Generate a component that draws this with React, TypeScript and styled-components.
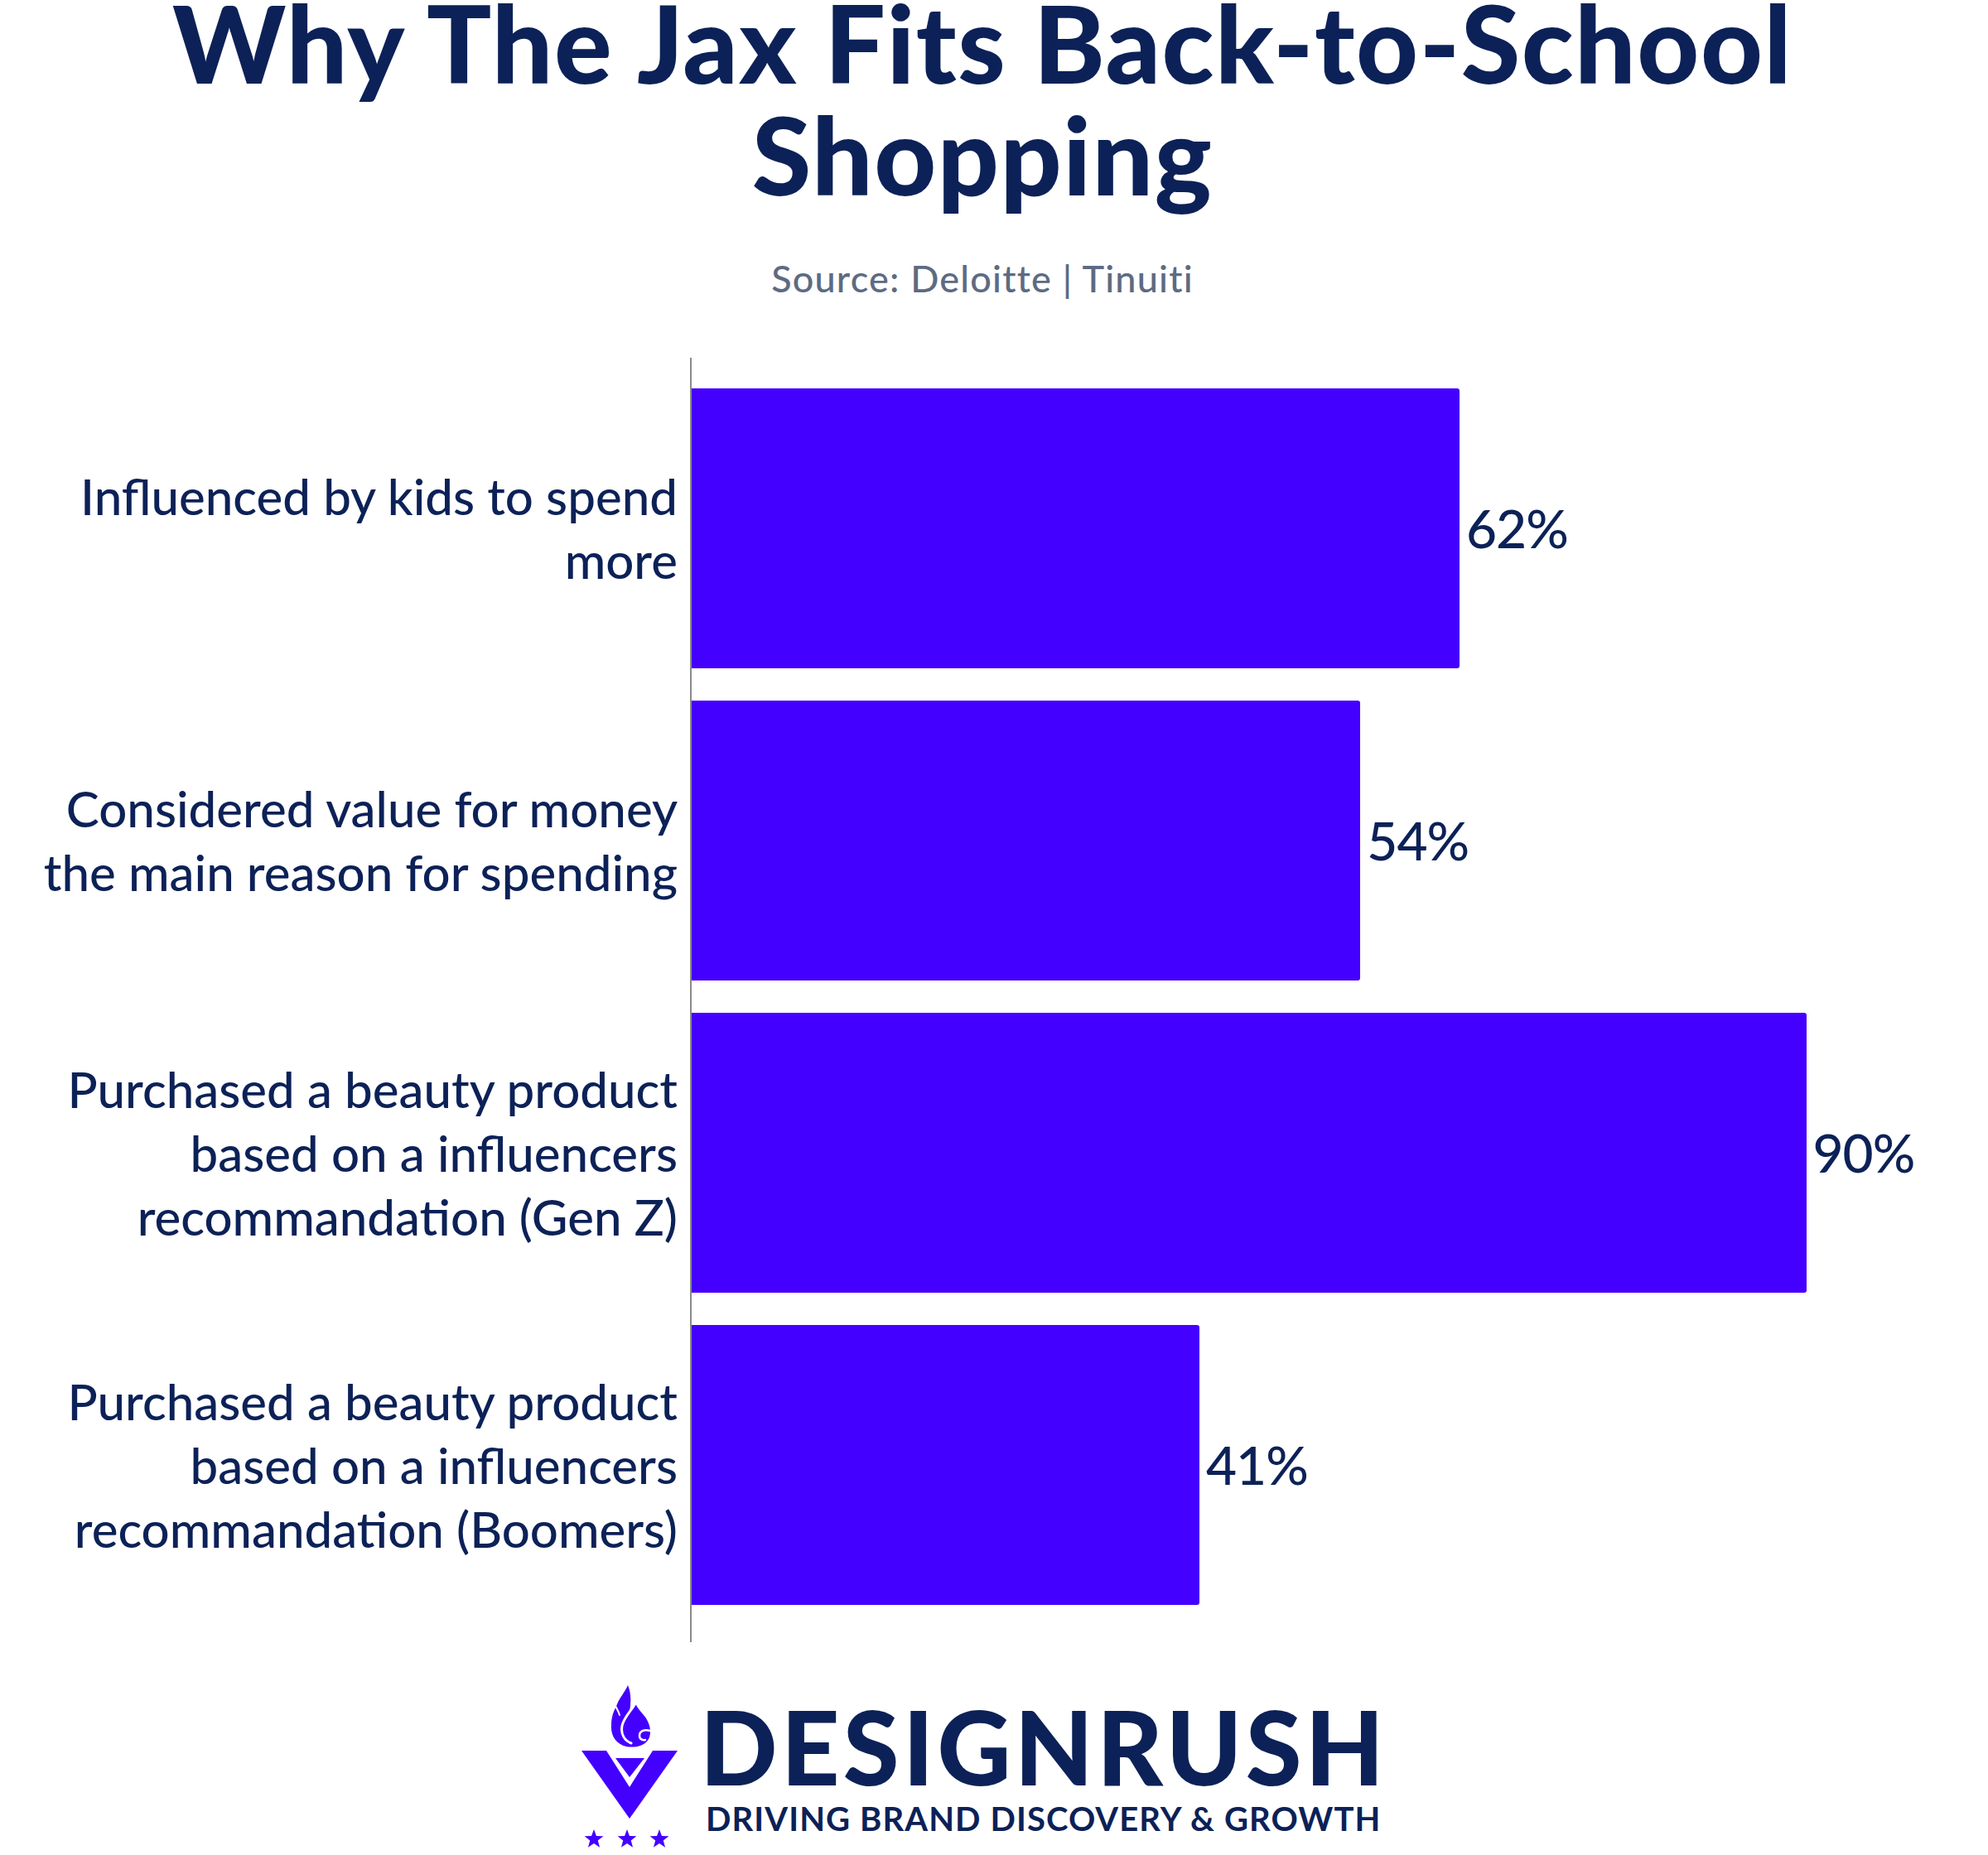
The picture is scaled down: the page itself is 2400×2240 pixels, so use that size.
import styled, { createGlobalStyle } from 'styled-components';

const NAVY = '#0c2157';
const VIOLET = '#4400ff';
const PX_PER_PCT = 14.95;

interface IRow {
  lines: string[];
  value: number;
}

const rows: IRow[] = [
  { lines: ['Influenced by kids to spend', 'more'], value: 62 },
  { lines: ['Considered value for money', 'the main reason for spending'], value: 54 },
  {
    lines: ['Purchased a beauty product', 'based on a influencers', 'recommandation (Gen Z)'],
    value: 90,
  },
  {
    lines: ['Purchased a beauty product', 'based on a influencers', 'recommandation (Boomers)'],
    value: 41,
  },
];

const GlobalStyle = createGlobalStyle`
  html, body {
    margin: 0;
    padding: 0;
    background: #ffffff;
  }
  body {
    font-family: Lato, 'Noto Sans', sans-serif;
    color: ${NAVY};
  }
`;

const Page = styled.div`
  width: 2400px;
  height: 2240px;
  overflow: hidden;
  display: flex;
  flex-direction: column;
  background: #ffffff;
`;

const Header = styled.header`
  display: flex;
  flex-direction: column;
  align-items: center;
  padding-right: 28px;
`;

const Title = styled.h1`
  margin: -16px 0 0;
  font-size: 130px;
  line-height: 135px;
  font-weight: 900;
  letter-spacing: 1.5px;
  text-align: center;
  color: ${NAVY};
  white-space: nowrap;
`;

const Source = styled.p`
  margin: 56px 0 0;
  font-size: 45px;
  line-height: 52px;
  font-weight: 500;
  letter-spacing: 1.2px;
  color: #5d6b82;
`;

const Chart = styled.section`
  margin-top: 70px;
  display: flex;
`;

const LabelColumn = styled.div`
  width: 818px;
  padding: 37px 0 45px;
  display: flex;
  flex-direction: column;
  gap: 39px;
  margin-right: 15px;
`;

const Label = styled.div`
  height: 338px;
  display: flex;
  flex-direction: column;
  justify-content: center;
  align-items: flex-end;
  font-size: 60px;
  line-height: 77px;
  font-weight: 500;
  white-space: nowrap;
`;

const BarColumn = styled.div`
  flex: 1;
  border-left: 2px solid #8a8a8a;
  padding: 37px 0 45px;
  display: flex;
  flex-direction: column;
  gap: 39px;
`;

const BarRow = styled.div`
  height: 338px;
  display: flex;
  align-items: center;
  gap: 8px;
`;

const Bar = styled.div<{ $pct: number }>`
  height: 100%;
  width: ${(p) => p.$pct * PX_PER_PCT}px;
  background: ${VIOLET};
  border-radius: 0 3px 3px 0;
`;

const Value = styled.span`
  font-size: 64px;
  line-height: 1;
  font-weight: 500;
  letter-spacing: -1px;
`;

const Brand = styled.footer`
  margin: 43px 0 0 700px;
  display: flex;
  align-items: flex-start;
  gap: 32px;
`;

const BrandText = styled.div`
  margin-top: 33px;
  display: flex;
  flex-direction: column;
  gap: 17px;
`;

const BrandName = styled.div`
  margin-left: -7px;
  font-size: 123px;
  line-height: 100px;
  font-weight: 900;
  letter-spacing: 4.3px;
  color: ${NAVY};
  white-space: nowrap;
`;

const Tagline = styled.div`
  font-size: 40px;
  line-height: 40px;
  font-weight: 700;
  letter-spacing: 1.1px;
  color: ${NAVY};
  white-space: nowrap;
`;

const Star = ({ cx }: { cx: number }) => {
  const pts: string[] = [];
  for (let i = 0; i < 10; i++) {
    const r = i % 2 === 0 ? 12 : 5;
    const a = -Math.PI / 2 + (i * Math.PI) / 5;
    pts.push(`${cx + r * Math.cos(a)},${195 + r * Math.sin(a)}`);
  }
  return <polygon points={pts.join(' ')} fill={VIOLET} />;
};

const BrandMark = () => (
  <svg width="120" height="210" viewBox="0 0 120 210">
    {/* flame */}
    <path
      d="M58 9 C 54 18, 48 24, 45 32 C 41 40, 38 47, 38 57 C 37 70, 44 80, 56 83 C 68 85, 80 82, 84 72 C 87 62, 83 52, 77 45 C 73 40, 69 36, 67 31 C 64 36, 62 39, 60 41 C 62 30, 62 18, 58 9 Z"
      fill={VIOLET}
    />
    <g fill="none" stroke="#ffffff" strokeLinecap="round">
      <path d="M67 31 C 62 40, 53 48, 51 58 C 49 68, 54 76, 62 79" strokeWidth="3" />
      <path d="M85 64 C 78 62, 72 64, 72 70 C 72 74, 76 76, 79 75" strokeWidth="2.5" />
      <path d="M43 34 C 45 38, 47 41, 48 45" strokeWidth="2" />
    </g>
    {/* V chevron with inner triangle */}
    <polygon points="2,88 32,88 60,132 88,88 118,88 60,170" fill={VIOLET} />
    <polygon points="43,97 78,97 60,120" fill={VIOLET} />
    <Star cx={17} />
    <Star cx={57} />
    <Star cx={96} />
  </svg>
);

const App = () => {
  return (
    <Page>
      <GlobalStyle />
      <Header>
        <Title>
          Why The Jax Fits Back-to-School
          <br />
          Shopping
        </Title>
        <Source>Source: Deloitte | Tinuiti</Source>
      </Header>
      <Chart>
        <LabelColumn>
          {rows.map((r, i) => (
            <Label key={i}>
              {r.lines.map((l, j) => (
                <span key={j}>{l}</span>
              ))}
            </Label>
          ))}
        </LabelColumn>
        <BarColumn>
          {rows.map((r, i) => (
            <BarRow key={i}>
              <Bar $pct={r.value} />
              <Value>{r.value}%</Value>
            </BarRow>
          ))}
        </BarColumn>
      </Chart>
      <Brand>
        <BrandMark />
        <BrandText>
          <BrandName>DESIGNRUSH</BrandName>
          <Tagline>DRIVING BRAND DISCOVERY &amp; GROWTH</Tagline>
        </BrandText>
      </Brand>
    </Page>
  );
};

export default App;
